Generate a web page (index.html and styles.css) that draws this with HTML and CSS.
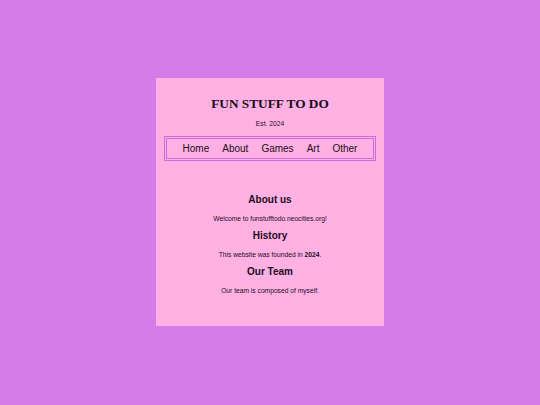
FILE: index.html
```html
<!DOCTYPE html>
<html>
<head>
<meta charset="utf-8">
<title>Fun Stuff To Do</title>
<link rel="stylesheet" href="styles.css">
</head>
<body>
<div class="card">
  <h1 class="title">FUN STUFF TO DO</h1>
  <p class="est">Est. 2024</p>
  <nav class="nav">
    <a href="#">Home</a>
    <a href="#">About</a>
    <a href="#">Games</a>
    <a href="#">Art</a>
    <a href="#">Other</a>
  </nav>
  <section class="content">
    <h2 class="heading">About us</h2>
    <p class="text">Welcome to funstufftodo.neocities.org!</p>
    <h2 class="heading">History</h2>
    <p class="text">This website was founded in <b>2024</b>.</p>
    <h2 class="heading">Our Team</h2>
    <p class="text">Our team is composed of myself.</p>
  </section>
</div>
</body>
</html>
```

FILE: styles.css
```css
html, body {
  margin: 0;
  padding: 0;
}
body {
  background: #d47ce8;
  padding-top: 78px;
  display: flex;
  justify-content: center;
  align-items: flex-start;
  font-family: "Liberation Sans", Arial, sans-serif;
  color: #1c0c1c;
}
.card {
  box-sizing: border-box;
  width: 228px;
  height: 248px;
  background: #ffb1e3;
  padding: 18px 8px 0;
  text-align: center;
}
.title {
  margin: 0;
  font-family: "Liberation Serif", "Times New Roman", serif;
  font-weight: bold;
  font-size: 13.3px;
  line-height: 16px;
}
.est {
  margin: 7px 0 0;
  font-size: 6.7px;
  line-height: 10px;
}
.nav {
  margin-top: 7px;
  border: 3px double #cc6bdc;
  height: 19px;
  display: flex;
  justify-content: center;
  align-items: center;
  gap: 13px;
}
.nav a {
  color: #1c0c1c;
  text-decoration: none;
  font-size: 10px;
  line-height: 19px;
}
.content {
  margin-top: 33px;
}
.heading {
  margin: 0;
  font-size: 10px;
  line-height: 12px;
  font-weight: bold;
}
.text {
  margin: 7.5px 0;
  font-size: 6.7px;
  line-height: 9px;
}
```
